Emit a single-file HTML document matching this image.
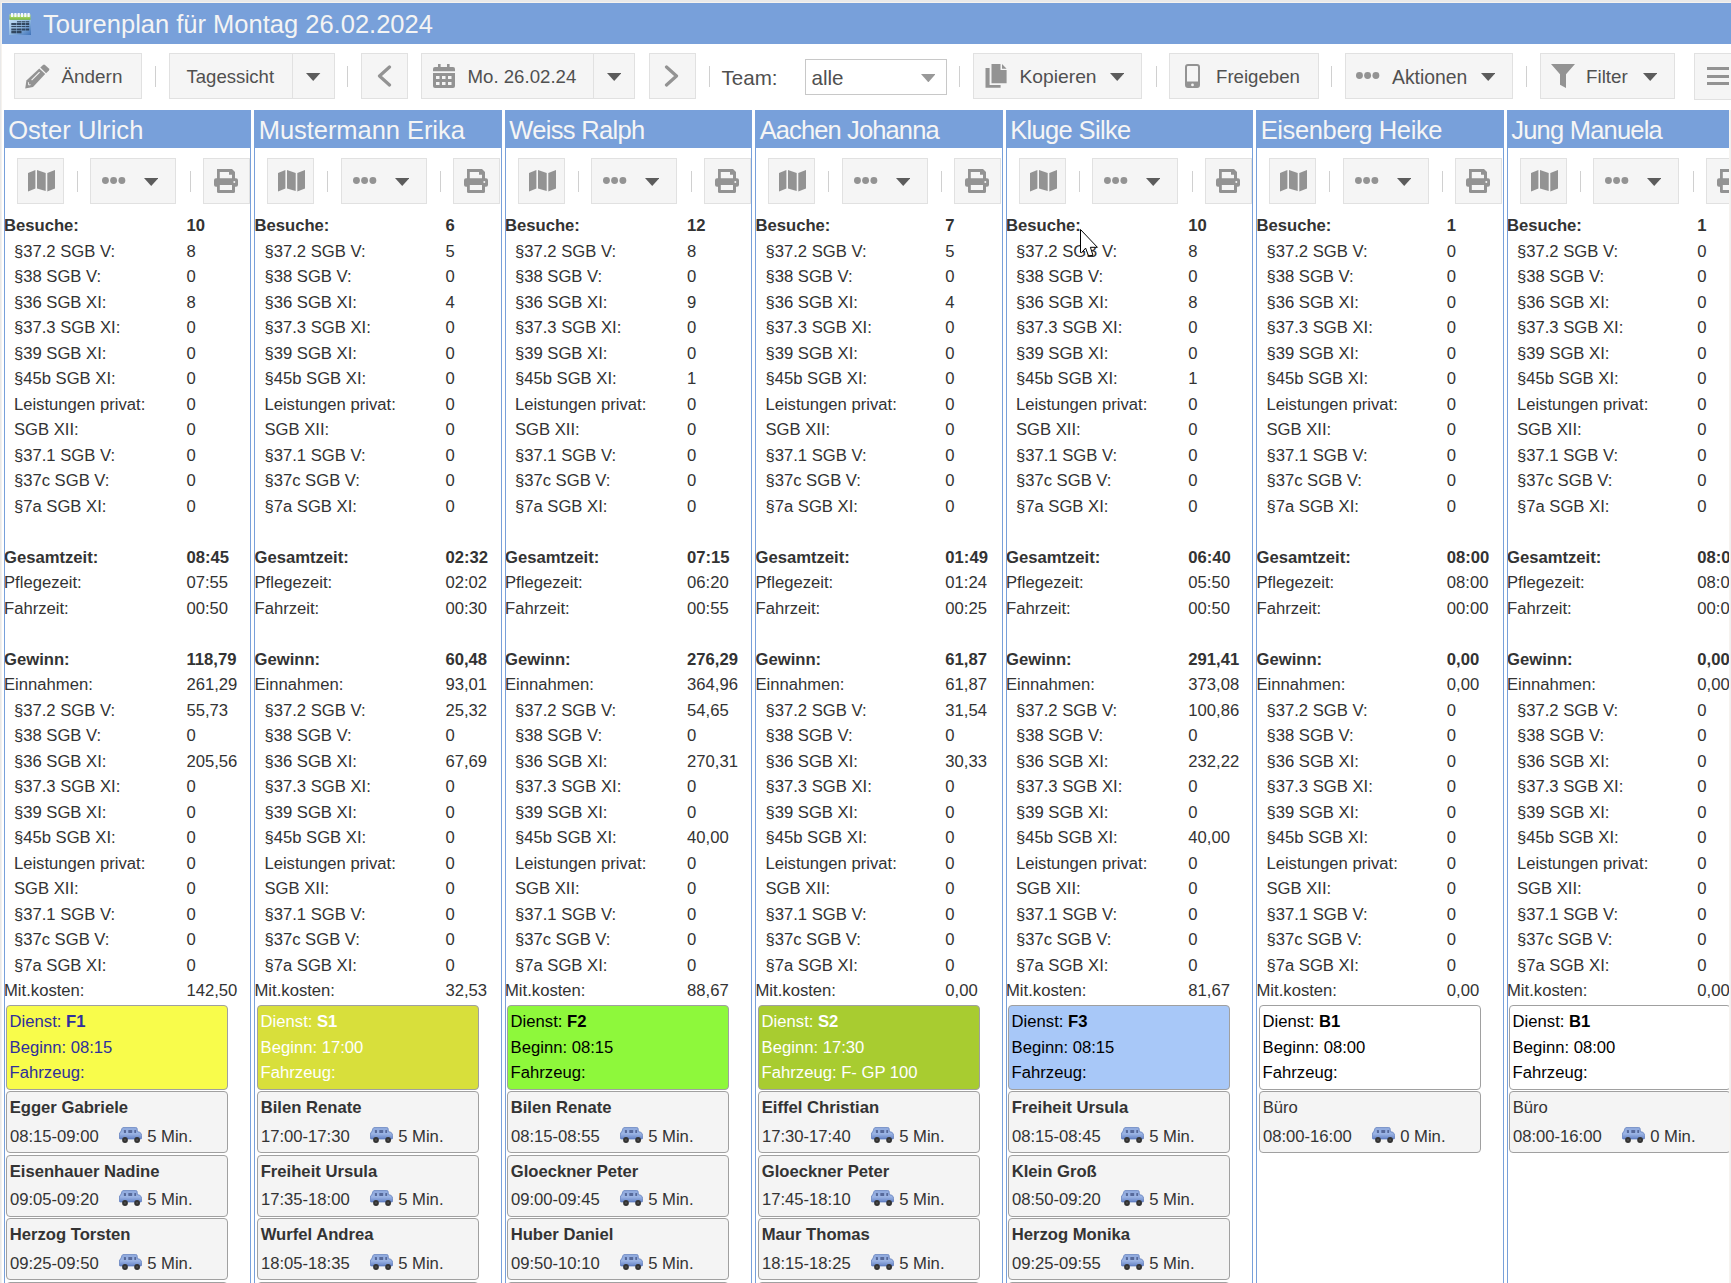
<!DOCTYPE html>
<html><head><meta charset="utf-8"><style>
*{box-sizing:border-box}
html,body{margin:0;padding:0}
body{width:1731px;height:1283px;overflow:hidden;position:relative;background:#e9e9e9;font-family:"Liberation Sans", sans-serif;color:#333}
#page{position:absolute;left:1px;top:2px;width:1730px;height:1281px;background:#f5f2ee}
#page2{position:absolute;left:2px;top:3px;width:1729px;height:1280px;background:#fff}
#rstrip{position:absolute;left:1729px;top:110px;width:2px;height:1173px;background:#efefef;border-left:1px solid #f6f3ef;z-index:5}
.a{position:absolute}
.ic{position:absolute;display:block}
#title{position:absolute;left:2px;top:3px;width:1729px;height:41px;background:#78a0da}
#title .t{position:absolute;left:41px;top:1px;font-size:25.5px;line-height:41px;color:#f4f4f4;white-space:nowrap}
.btn{position:absolute;top:53px;height:46px;border:1px solid #e1e1e1;background:#f5f5f5}
.bt{position:absolute;font-size:18.6px;line-height:46px;top:54px;color:#505050;white-space:nowrap}
.sep{position:absolute;top:66px;width:1px;height:21px;background:#d0d0d0}
.ch{position:absolute;top:110px;height:38px;background:#78a0da;overflow:hidden}
.ch span{position:absolute;left:4.2px;top:1px;font-size:25.5px;line-height:38px;color:#f5f5f5;white-space:nowrap}
.col{position:absolute;top:148px;height:1135px;border-left:1px solid #78a0da;border-right:1px solid #78a0da;overflow:hidden}
.cbtn{position:absolute;top:10px;height:46px;border:1px solid #e1e1e1;background:#f5f5f5}
.csep{position:absolute;top:23px;width:1px;height:21px;background:#d0d0d0}
table.st{position:absolute;left:-1px;top:65.2px;border-collapse:collapse;font-size:16.65px}
table.st td{padding:0;height:25.5px;line-height:25.5px;white-space:nowrap;color:#333}
table.st td.v{padding:0}
table.st tr.b td{font-weight:bold}
table.st td.i{padding-left:9.9px}
.dn{position:absolute;left:1px;top:857px;width:222px;height:85px;border:1px solid #a0a0a0;border-radius:4px;padding:3.3px 0 0 2.6px;font-size:16.65px;line-height:25.5px;white-space:nowrap}
.card{position:absolute;left:1px;width:222px;height:62px;border:1px solid #a0a0a0;border-radius:4px;background:#f4f4f4;font-size:16.65px}
.card .n{position:absolute;left:2.7px;top:3px;line-height:25.5px;font-weight:bold;white-space:nowrap}
.card .tm{position:absolute;left:2.9px;top:31.5px;line-height:25.5px;white-space:nowrap}
.card .mn{position:absolute;left:140.2px;top:31.5px;line-height:25.5px;white-space:nowrap}
</style></head><body>
<svg width="0" height="0" style="position:absolute"><defs><linearGradient id="carg" x1="0" y1="0" x2="0" y2="1"><stop offset="0" stop-color="#8ea8dc"/><stop offset="0.55" stop-color="#9bb4e4"/><stop offset="1" stop-color="#6583c6"/></linearGradient></defs></svg>
<div id="page"></div><div id="page2"></div>
<div id="title">
<svg class="ic" style="left:7px;top:10px" width="22" height="22" viewBox="0 0 22 22">
<defs><linearGradient id="tg" x1="0" y1="0" x2="1" y2="1"><stop offset="0" stop-color="#c4e0f6"/><stop offset="0.5" stop-color="#90b8e0"/><stop offset="1" stop-color="#3f72b8"/></linearGradient>
<linearGradient id="tgg" x1="0" y1="0" x2="0" y2="1"><stop offset="0" stop-color="#c8e890"/><stop offset="1" stop-color="#78b838"/></linearGradient></defs>
<rect x="0" y="6.5" width="22" height="15.5" fill="url(#tg)"/>
<rect x="0.5" y="1.5" width="21" height="5.3" fill="url(#tgg)"/>
<g fill="#f4f8ff"><rect x="2" y="0" width="2.2" height="4"/><rect x="5.3" y="0" width="2.2" height="4"/><rect x="8.6" y="0" width="2.2" height="4"/><rect x="11.9" y="0" width="2.2" height="4"/><rect x="15.2" y="0" width="2.2" height="4"/><rect x="18.5" y="0" width="2.2" height="4"/></g>
<g fill="#22344a" opacity="0.85"><rect x="8.0" y="8.2" width="4.5" height="1.2"/><rect x="13.0" y="8.2" width="3.5" height="1.2"/><rect x="17.0" y="8.2" width="3.2" height="1.2"/><rect x="2.3" y="10.0" width="5.2" height="2.0"/><rect x="8.0" y="10.0" width="4.5" height="2.0"/><rect x="13.0" y="10.0" width="3.5" height="2.0"/><rect x="17.0" y="10.0" width="3.2" height="2.0"/><rect x="2.3" y="12.9" width="5.2" height="1.2"/><rect x="8.0" y="12.9" width="4.5" height="1.2"/><rect x="13.0" y="12.9" width="3.5" height="1.2"/><rect x="17.0" y="12.9" width="3.2" height="1.2"/><rect x="2.3" y="15.5" width="5.2" height="2.0"/><rect x="8.0" y="15.5" width="4.5" height="2.0"/><rect x="13.0" y="15.5" width="3.5" height="2.0"/><rect x="17.0" y="15.5" width="3.2" height="2.0"/><rect x="2.3" y="18.0" width="5.2" height="2.3"/><rect x="8.0" y="18.0" width="4.5" height="2.3"/></g>
</svg>
<div class="t">Tourenplan für Montag 26.02.2024</div>
</div>

<div class="btn" style="left:14px;width:128px;top:53px;height:46px"></div>
<svg class="ic" style="left:25px;top:63.5px" width="25" height="25" viewBox="0 0 25 25"><g fill="#939393"><path d="M15.3 3.6L18 0.9Q19 0 20 0.9L23.9 4.5Q24.9 5.5 23.9 6.5L21.1 9.2Z"/><path d="M14.3 4.6L20.2 10.1L8 23.1L0.2 24.4L1.4 16.5Z"/></g><path fill="#f5f5f5" d="M14.2 7.7L15 8.5L7 16.6L6.2 15.8Z"/><path fill="none" stroke="#f5f5f5" stroke-width="0.9" d="M3.4 18.2L3.7 21L5.6 20.7"/></svg>
<div class="bt" style="left:61.5px;font-size:18.9px">Ändern</div>
<div class="sep" style="left:155px"></div>
<div class="btn" style="left:169px;width:166px;top:53px;height:46px"></div>
<div class="a" style="left:292px;top:53px;width:1px;height:46px;background:#e1e1e1"></div>
<div class="bt" style="left:186.5px;font-size:18.55px">Tagessicht</div>
<svg class="ic" style="left:306.4px;top:73px" width="14.4" height="8" viewBox="0 0 14.4 8"><path d="M0 0H14.4L7.2 8Z" fill="#5c5c5c"/></svg>
<div class="sep" style="left:347px"></div>
<div class="btn" style="left:361px;width:47px;top:53px;height:46px"></div>
<svg class="ic" style="left:376px;top:65px" width="16" height="22" viewBox="0 0 16 22"><path d="M13.5 2L3.5 11L13.5 20" fill="none" stroke="#939393" stroke-width="3.2" stroke-linecap="round" stroke-linejoin="round"/></svg>
<div class="btn" style="left:421px;width:214px;top:53px;height:46px"></div>
<div class="a" style="left:593px;top:53px;width:1px;height:46px;background:#e1e1e1"></div>
<svg class="ic" style="left:433px;top:64px" width="22" height="24" viewBox="0 0 22 24"><g fill="#939393"><rect x="5" y="0" width="2.6" height="4"/><rect x="14" y="0" width="2.6" height="4"/><path d="M0 5Q0 3 2 3H20Q22 3 22 5V7.2H0Z"/><path d="M0 9H22V22Q22 24 20 24H2Q0 24 0 22Z"/></g><g fill="#f5f5f5"><rect x="3" y="12" width="3.5" height="3"/><rect x="9" y="12" width="3.5" height="3"/><rect x="15" y="12" width="3.5" height="3"/><rect x="3" y="18" width="3.5" height="3"/><rect x="9" y="18" width="3.5" height="3"/><rect x="15" y="18" width="3.5" height="3"/></g></svg>
<div class="bt" style="left:467.5px;font-size:18.65px">Mo. 26.02.24</div>
<svg class="ic" style="left:607px;top:73px" width="14.4" height="8" viewBox="0 0 14.4 8"><path d="M0 0H14.4L7.2 8Z" fill="#5c5c5c"/></svg>
<div class="btn" style="left:649px;width:47px;top:53px;height:46px"></div>
<svg class="ic" style="left:664px;top:65px" width="16" height="22" viewBox="0 0 16 22"><path d="M2.5 2L12.5 11L2.5 20" fill="none" stroke="#939393" stroke-width="3.2" stroke-linecap="round" stroke-linejoin="round"/></svg>
<div class="sep" style="left:709px"></div>
<div class="bt" style="left:721.5px;font-size:20.6px;top:55px">Team:</div>
<div class="a" style="left:805px;top:59px;width:142px;height:36px;border:1px solid #c8c8c8;background:#fff"></div>
<div class="bt" style="left:811.5px;font-size:20.6px;top:55px">alle</div>
<svg class="ic" style="left:920.5px;top:74px" width="14.7" height="8.3" viewBox="0 0 14.7 8.3"><path d="M0 0H14.7L7.35 8.3Z" fill="#999"/></svg>
<div class="sep" style="left:959px"></div>
<div class="btn" style="left:973px;width:169px;top:53px;height:46px"></div>
<svg class="ic" style="left:985px;top:64px" width="22" height="24" viewBox="0 0 22 24"><g fill="#939393"><path d="M6.5 0H15.5V6H21.6V19.3H6.5Z"/><path d="M17 0L21.6 4.7H17Z"/><path d="M0.5 4H4.6V21H15.6V23.7H0.5Z"/></g></svg>
<div class="bt" style="left:1019.5px;font-size:19.25px">Kopieren</div>
<svg class="ic" style="left:1110px;top:73px" width="14.4" height="8" viewBox="0 0 14.4 8"><path d="M0 0H14.4L7.2 8Z" fill="#5c5c5c"/></svg>
<div class="sep" style="left:1156px"></div>
<div class="btn" style="left:1169px;width:150px;top:53px;height:46px"></div>
<svg class="ic" style="left:1185px;top:64px" width="15" height="24" viewBox="0 0 15 24"><rect x="1" y="1" width="13" height="22" rx="2" fill="none" stroke="#939393" stroke-width="2"/><rect x="1" y="17.5" width="13" height="5.5" fill="#939393"/><circle cx="7.5" cy="20.9" r="1.4" fill="#f5f5f5"/></svg>
<div class="bt" style="left:1216px;font-size:18.65px">Freigeben</div>
<div class="sep" style="left:1331px"></div>
<div class="btn" style="left:1345px;width:168px;top:53px;height:46px"></div>
<svg class="ic" style="left:1356px;top:72.3px" width="24" height="7" viewBox="0 0 24 7"><g fill="#939393"><circle cx="3.45" cy="3.5" r="3.45"/><circle cx="11.6" cy="3.5" r="3.45"/><circle cx="19.9" cy="3.5" r="3.45"/></g></svg>
<div class="bt" style="left:1392px;font-size:19.35px">Aktionen</div>
<svg class="ic" style="left:1480.7px;top:73px" width="14.4" height="8" viewBox="0 0 14.4 8"><path d="M0 0H14.4L7.2 8Z" fill="#5c5c5c"/></svg>
<div class="sep" style="left:1526px"></div>
<div class="btn" style="left:1540px;width:135px;top:53px;height:46px"></div>
<svg class="ic" style="left:1551px;top:64px" width="24" height="24" viewBox="0 0 24 24"><path fill="#939393" d="M0 0H24L15 10.3V24L9 20.7V10.3Z"/></svg>
<div class="bt" style="left:1586px;font-size:18.8px">Filter</div>
<svg class="ic" style="left:1643px;top:73px" width="14.4" height="8" viewBox="0 0 14.4 8"><path d="M0 0H14.4L7.2 8Z" fill="#5c5c5c"/></svg>
<div class="btn" style="left:1694px;width:66px;top:53px;height:47px"></div>
<div class="a" style="left:1707px;top:67px;width:21.5px;height:3px;background:#939393"></div>
<div class="a" style="left:1707px;top:74.5px;width:21.5px;height:3px;background:#939393"></div>
<div class="a" style="left:1707px;top:82px;width:21.5px;height:3px;background:#939393"></div>
<div class="ch" style="left:4px;width:247px"><span style="left:4.2px;letter-spacing:0.05px">Oster Ulrich</span></div>
<div class="col" style="left:4px;width:247px">
<div class="cbtn" style="left:12px;width:47px"></div>
<svg class="ic" style="left:23px;top:22px" width="27" height="22" viewBox="0 0 27 22"><g fill="#939393"><path d="M0 3L7.4 0V18.5L0 21.5Z"/><path d="M9 0L17.7 3V21L9 18.5Z"/><path d="M19.3 3L27 0V18.5L19.3 21.5Z"/></g></svg>
<div class="csep" style="left:72.4px"></div>
<div class="cbtn" style="left:85px;width:86px"></div>
<svg class="ic" style="left:96.7px;top:29.3px" width="24" height="7" viewBox="0 0 24 7"><g fill="#939393"><circle cx="3.45" cy="3.5" r="3.45"/><circle cx="11.6" cy="3.5" r="3.45"/><circle cx="19.9" cy="3.5" r="3.45"/></g></svg>
<svg class="ic" style="left:138.7px;top:30px" width="14.4" height="8" viewBox="0 0 14.4 8"><path d="M0 0H14.4L7.2 8Z" fill="#5c5c5c"/></svg>
<div class="csep" style="left:184.5px"></div>
<div class="cbtn" style="left:198px;width:47px"></div>
<svg class="ic" style="left:209px;top:20.9px" width="24" height="24" viewBox="0 0 24 24"><path fill="#939393" d="M3 0H18L21 3V10H3Z"/><path fill="#f5f5f5" d="M5.8 2.9H15V5.8H18V10H5.8Z"/><rect fill="#939393" x="0" y="9.2" width="24" height="8.6" rx="2"/><path fill="#939393" d="M3 15H21V22.5Q21 24 19.5 24H4.5Q3 24 3 22.5Z"/><rect fill="#f5f5f5" x="5.8" y="16" width="12.2" height="5"/><circle fill="#f5f5f5" cx="20.3" cy="12.9" r="1"/></svg>
<table class="st" style="width:246.0px;left:-1.0px">
<tr class="b"><td class="">Besuche:</td><td class="v" style="width:63.55px">10</td></tr>
<tr class=""><td class="i">§37.2 SGB V:</td><td class="v">8</td></tr>
<tr class=""><td class="i">§38 SGB V:</td><td class="v">0</td></tr>
<tr class=""><td class="i">§36 SGB XI:</td><td class="v">8</td></tr>
<tr class=""><td class="i">§37.3 SGB XI:</td><td class="v">0</td></tr>
<tr class=""><td class="i">§39 SGB XI:</td><td class="v">0</td></tr>
<tr class=""><td class="i">§45b SGB XI:</td><td class="v">0</td></tr>
<tr class=""><td class="i">Leistungen privat:</td><td class="v">0</td></tr>
<tr class=""><td class="i">SGB XII:</td><td class="v">0</td></tr>
<tr class=""><td class="i">§37.1 SGB V:</td><td class="v">0</td></tr>
<tr class=""><td class="i">§37c SGB V:</td><td class="v">0</td></tr>
<tr class=""><td class="i">§7a SGB XI:</td><td class="v">0</td></tr>
<tr class=""><td class="">&nbsp;</td><td class="v"></td></tr>
<tr class="b"><td class="">Gesamtzeit:</td><td class="v">08:45</td></tr>
<tr class=""><td class="">Pflegezeit:</td><td class="v">07:55</td></tr>
<tr class=""><td class="">Fahrzeit:</td><td class="v">00:50</td></tr>
<tr class=""><td class="">&nbsp;</td><td class="v"></td></tr>
<tr class="b"><td class="">Gewinn:</td><td class="v">118,79</td></tr>
<tr class=""><td class="">Einnahmen:</td><td class="v">261,29</td></tr>
<tr class=""><td class="i">§37.2 SGB V:</td><td class="v">55,73</td></tr>
<tr class=""><td class="i">§38 SGB V:</td><td class="v">0</td></tr>
<tr class=""><td class="i">§36 SGB XI:</td><td class="v">205,56</td></tr>
<tr class=""><td class="i">§37.3 SGB XI:</td><td class="v">0</td></tr>
<tr class=""><td class="i">§39 SGB XI:</td><td class="v">0</td></tr>
<tr class=""><td class="i">§45b SGB XI:</td><td class="v">0</td></tr>
<tr class=""><td class="i">Leistungen privat:</td><td class="v">0</td></tr>
<tr class=""><td class="i">SGB XII:</td><td class="v">0</td></tr>
<tr class=""><td class="i">§37.1 SGB V:</td><td class="v">0</td></tr>
<tr class=""><td class="i">§37c SGB V:</td><td class="v">0</td></tr>
<tr class=""><td class="i">§7a SGB XI:</td><td class="v">0</td></tr>
<tr class=""><td class="">Mit.kosten:</td><td class="v">142,50</td></tr>
</table>
<div class="dn" style="left:1px;background:#f8fc4b;color:#2f2f9c">Dienst: <b>F1</b><br>Beginn: 08:15<br>Fahrzeug: </div>
<div class="card" style="left:1px;top:943.0px"><div class="n" style="">Egger Gabriele</div><div class="tm">08:15-09:00</div><svg class="ic" style="left:111.5px;top:34.7px" width="23" height="16" viewBox="0 0 23 16"><path fill="url(#carg)" stroke="#5675b9" stroke-width="0.7" d="M0.4 7Q0.6 5.2 1.9 4.6L3 1.4Q3.5 0.4 4.8 0.4H16.6Q17.8 0.4 18.1 1.5L18.4 4.6L20.8 5.3Q22.6 6.2 22.6 8.5V11Q22.6 12 21.6 12H1.4Q0.4 12 0.4 11Z"/><g fill="#56699a"><rect x="4.9" y="3.1" width="2.1" height="3" rx="0.5"/><rect x="9.3" y="3.1" width="3.9" height="3" rx="0.5"/><rect x="15.3" y="3.1" width="1.8" height="3" rx="0.5"/></g><g fill="#333"><circle cx="6" cy="13" r="2.9"/><circle cx="18.1" cy="13" r="2.9"/></g><g fill="#555"><circle cx="6" cy="13" r="0.9"/><circle cx="18.1" cy="13" r="0.9"/></g></svg><div class="mn">5 Min.</div></div>
<div class="card" style="left:1px;top:1006.5px"><div class="n" style="">Eisenhauer Nadine</div><div class="tm">09:05-09:20</div><svg class="ic" style="left:111.5px;top:34.7px" width="23" height="16" viewBox="0 0 23 16"><path fill="url(#carg)" stroke="#5675b9" stroke-width="0.7" d="M0.4 7Q0.6 5.2 1.9 4.6L3 1.4Q3.5 0.4 4.8 0.4H16.6Q17.8 0.4 18.1 1.5L18.4 4.6L20.8 5.3Q22.6 6.2 22.6 8.5V11Q22.6 12 21.6 12H1.4Q0.4 12 0.4 11Z"/><g fill="#56699a"><rect x="4.9" y="3.1" width="2.1" height="3" rx="0.5"/><rect x="9.3" y="3.1" width="3.9" height="3" rx="0.5"/><rect x="15.3" y="3.1" width="1.8" height="3" rx="0.5"/></g><g fill="#333"><circle cx="6" cy="13" r="2.9"/><circle cx="18.1" cy="13" r="2.9"/></g><g fill="#555"><circle cx="6" cy="13" r="0.9"/><circle cx="18.1" cy="13" r="0.9"/></g></svg><div class="mn">5 Min.</div></div>
<div class="card" style="left:1px;top:1070.0px"><div class="n" style="">Herzog Torsten</div><div class="tm">09:25-09:50</div><svg class="ic" style="left:111.5px;top:34.7px" width="23" height="16" viewBox="0 0 23 16"><path fill="url(#carg)" stroke="#5675b9" stroke-width="0.7" d="M0.4 7Q0.6 5.2 1.9 4.6L3 1.4Q3.5 0.4 4.8 0.4H16.6Q17.8 0.4 18.1 1.5L18.4 4.6L20.8 5.3Q22.6 6.2 22.6 8.5V11Q22.6 12 21.6 12H1.4Q0.4 12 0.4 11Z"/><g fill="#56699a"><rect x="4.9" y="3.1" width="2.1" height="3" rx="0.5"/><rect x="9.3" y="3.1" width="3.9" height="3" rx="0.5"/><rect x="15.3" y="3.1" width="1.8" height="3" rx="0.5"/></g><g fill="#333"><circle cx="6" cy="13" r="2.9"/><circle cx="18.1" cy="13" r="2.9"/></g><g fill="#555"><circle cx="6" cy="13" r="0.9"/><circle cx="18.1" cy="13" r="0.9"/></g></svg><div class="mn">5 Min.</div></div>
<div class="card" style="left:1px;top:1133.5px"></div>
</div>
<div class="ch" style="left:254px;width:248px"><span style="left:4.7px;letter-spacing:-0.05px">Mustermann Erika</span></div>
<div class="col" style="left:254px;width:248px">
<div class="cbtn" style="left:12px;width:47px"></div>
<svg class="ic" style="left:23px;top:22px" width="27" height="22" viewBox="0 0 27 22"><g fill="#939393"><path d="M0 3L7.4 0V18.5L0 21.5Z"/><path d="M9 0L17.7 3V21L9 18.5Z"/><path d="M19.3 3L27 0V18.5L19.3 21.5Z"/></g></svg>
<div class="csep" style="left:72.4px"></div>
<div class="cbtn" style="left:86.0px;width:86px"></div>
<svg class="ic" style="left:97.7px;top:29.3px" width="24" height="7" viewBox="0 0 24 7"><g fill="#939393"><circle cx="3.45" cy="3.5" r="3.45"/><circle cx="11.6" cy="3.5" r="3.45"/><circle cx="19.9" cy="3.5" r="3.45"/></g></svg>
<svg class="ic" style="left:139.7px;top:30px" width="14.4" height="8" viewBox="0 0 14.4 8"><path d="M0 0H14.4L7.2 8Z" fill="#5c5c5c"/></svg>
<div class="csep" style="left:184.5px"></div>
<div class="cbtn" style="left:198px;width:47px"></div>
<svg class="ic" style="left:209px;top:20.9px" width="24" height="24" viewBox="0 0 24 24"><path fill="#939393" d="M3 0H18L21 3V10H3Z"/><path fill="#f5f5f5" d="M5.8 2.9H15V5.8H18V10H5.8Z"/><rect fill="#939393" x="0" y="9.2" width="24" height="8.6" rx="2"/><path fill="#939393" d="M3 15H21V22.5Q21 24 19.5 24H4.5Q3 24 3 22.5Z"/><rect fill="#f5f5f5" x="5.8" y="16" width="12.2" height="5"/><circle fill="#f5f5f5" cx="20.3" cy="12.9" r="1"/></svg>
<table class="st" style="width:246.5px;left:-0.5px">
<tr class="b"><td class="">Besuche:</td><td class="v" style="width:55.55px">6</td></tr>
<tr class=""><td class="i">§37.2 SGB V:</td><td class="v">5</td></tr>
<tr class=""><td class="i">§38 SGB V:</td><td class="v">0</td></tr>
<tr class=""><td class="i">§36 SGB XI:</td><td class="v">4</td></tr>
<tr class=""><td class="i">§37.3 SGB XI:</td><td class="v">0</td></tr>
<tr class=""><td class="i">§39 SGB XI:</td><td class="v">0</td></tr>
<tr class=""><td class="i">§45b SGB XI:</td><td class="v">0</td></tr>
<tr class=""><td class="i">Leistungen privat:</td><td class="v">0</td></tr>
<tr class=""><td class="i">SGB XII:</td><td class="v">0</td></tr>
<tr class=""><td class="i">§37.1 SGB V:</td><td class="v">0</td></tr>
<tr class=""><td class="i">§37c SGB V:</td><td class="v">0</td></tr>
<tr class=""><td class="i">§7a SGB XI:</td><td class="v">0</td></tr>
<tr class=""><td class="">&nbsp;</td><td class="v"></td></tr>
<tr class="b"><td class="">Gesamtzeit:</td><td class="v">02:32</td></tr>
<tr class=""><td class="">Pflegezeit:</td><td class="v">02:02</td></tr>
<tr class=""><td class="">Fahrzeit:</td><td class="v">00:30</td></tr>
<tr class=""><td class="">&nbsp;</td><td class="v"></td></tr>
<tr class="b"><td class="">Gewinn:</td><td class="v">60,48</td></tr>
<tr class=""><td class="">Einnahmen:</td><td class="v">93,01</td></tr>
<tr class=""><td class="i">§37.2 SGB V:</td><td class="v">25,32</td></tr>
<tr class=""><td class="i">§38 SGB V:</td><td class="v">0</td></tr>
<tr class=""><td class="i">§36 SGB XI:</td><td class="v">67,69</td></tr>
<tr class=""><td class="i">§37.3 SGB XI:</td><td class="v">0</td></tr>
<tr class=""><td class="i">§39 SGB XI:</td><td class="v">0</td></tr>
<tr class=""><td class="i">§45b SGB XI:</td><td class="v">0</td></tr>
<tr class=""><td class="i">Leistungen privat:</td><td class="v">0</td></tr>
<tr class=""><td class="i">SGB XII:</td><td class="v">0</td></tr>
<tr class=""><td class="i">§37.1 SGB V:</td><td class="v">0</td></tr>
<tr class=""><td class="i">§37c SGB V:</td><td class="v">0</td></tr>
<tr class=""><td class="i">§7a SGB XI:</td><td class="v">0</td></tr>
<tr class=""><td class="">Mit.kosten:</td><td class="v">32,53</td></tr>
</table>
<div class="dn" style="left:2.0px;background:#d8df3b;color:#ffffff">Dienst: <b>S1</b><br>Beginn: 17:00<br>Fahrzeug: </div>
<div class="card" style="left:2.0px;top:943.0px"><div class="n" style="">Bilen Renate</div><div class="tm">17:00-17:30</div><svg class="ic" style="left:111.5px;top:34.7px" width="23" height="16" viewBox="0 0 23 16"><path fill="url(#carg)" stroke="#5675b9" stroke-width="0.7" d="M0.4 7Q0.6 5.2 1.9 4.6L3 1.4Q3.5 0.4 4.8 0.4H16.6Q17.8 0.4 18.1 1.5L18.4 4.6L20.8 5.3Q22.6 6.2 22.6 8.5V11Q22.6 12 21.6 12H1.4Q0.4 12 0.4 11Z"/><g fill="#56699a"><rect x="4.9" y="3.1" width="2.1" height="3" rx="0.5"/><rect x="9.3" y="3.1" width="3.9" height="3" rx="0.5"/><rect x="15.3" y="3.1" width="1.8" height="3" rx="0.5"/></g><g fill="#333"><circle cx="6" cy="13" r="2.9"/><circle cx="18.1" cy="13" r="2.9"/></g><g fill="#555"><circle cx="6" cy="13" r="0.9"/><circle cx="18.1" cy="13" r="0.9"/></g></svg><div class="mn">5 Min.</div></div>
<div class="card" style="left:2.0px;top:1006.5px"><div class="n" style="">Freiheit Ursula</div><div class="tm">17:35-18:00</div><svg class="ic" style="left:111.5px;top:34.7px" width="23" height="16" viewBox="0 0 23 16"><path fill="url(#carg)" stroke="#5675b9" stroke-width="0.7" d="M0.4 7Q0.6 5.2 1.9 4.6L3 1.4Q3.5 0.4 4.8 0.4H16.6Q17.8 0.4 18.1 1.5L18.4 4.6L20.8 5.3Q22.6 6.2 22.6 8.5V11Q22.6 12 21.6 12H1.4Q0.4 12 0.4 11Z"/><g fill="#56699a"><rect x="4.9" y="3.1" width="2.1" height="3" rx="0.5"/><rect x="9.3" y="3.1" width="3.9" height="3" rx="0.5"/><rect x="15.3" y="3.1" width="1.8" height="3" rx="0.5"/></g><g fill="#333"><circle cx="6" cy="13" r="2.9"/><circle cx="18.1" cy="13" r="2.9"/></g><g fill="#555"><circle cx="6" cy="13" r="0.9"/><circle cx="18.1" cy="13" r="0.9"/></g></svg><div class="mn">5 Min.</div></div>
<div class="card" style="left:2.0px;top:1070.0px"><div class="n" style="">Wurfel Andrea</div><div class="tm">18:05-18:35</div><svg class="ic" style="left:111.5px;top:34.7px" width="23" height="16" viewBox="0 0 23 16"><path fill="url(#carg)" stroke="#5675b9" stroke-width="0.7" d="M0.4 7Q0.6 5.2 1.9 4.6L3 1.4Q3.5 0.4 4.8 0.4H16.6Q17.8 0.4 18.1 1.5L18.4 4.6L20.8 5.3Q22.6 6.2 22.6 8.5V11Q22.6 12 21.6 12H1.4Q0.4 12 0.4 11Z"/><g fill="#56699a"><rect x="4.9" y="3.1" width="2.1" height="3" rx="0.5"/><rect x="9.3" y="3.1" width="3.9" height="3" rx="0.5"/><rect x="15.3" y="3.1" width="1.8" height="3" rx="0.5"/></g><g fill="#333"><circle cx="6" cy="13" r="2.9"/><circle cx="18.1" cy="13" r="2.9"/></g><g fill="#555"><circle cx="6" cy="13" r="0.9"/><circle cx="18.1" cy="13" r="0.9"/></g></svg><div class="mn">5 Min.</div></div>
<div class="card" style="left:2.0px;top:1133.5px"></div>
</div>
<div class="ch" style="left:505px;width:247px"><span style="left:4.2px;letter-spacing:-0.66px">Weiss Ralph</span></div>
<div class="col" style="left:505px;width:247px">
<div class="cbtn" style="left:12px;width:47px"></div>
<svg class="ic" style="left:23px;top:22px" width="27" height="22" viewBox="0 0 27 22"><g fill="#939393"><path d="M0 3L7.4 0V18.5L0 21.5Z"/><path d="M9 0L17.7 3V21L9 18.5Z"/><path d="M19.3 3L27 0V18.5L19.3 21.5Z"/></g></svg>
<div class="csep" style="left:72.4px"></div>
<div class="cbtn" style="left:85px;width:86px"></div>
<svg class="ic" style="left:96.7px;top:29.3px" width="24" height="7" viewBox="0 0 24 7"><g fill="#939393"><circle cx="3.45" cy="3.5" r="3.45"/><circle cx="11.6" cy="3.5" r="3.45"/><circle cx="19.9" cy="3.5" r="3.45"/></g></svg>
<svg class="ic" style="left:138.7px;top:30px" width="14.4" height="8" viewBox="0 0 14.4 8"><path d="M0 0H14.4L7.2 8Z" fill="#5c5c5c"/></svg>
<div class="csep" style="left:184.5px"></div>
<div class="cbtn" style="left:198px;width:47px"></div>
<svg class="ic" style="left:209px;top:20.9px" width="24" height="24" viewBox="0 0 24 24"><path fill="#939393" d="M3 0H18L21 3V10H3Z"/><path fill="#f5f5f5" d="M5.8 2.9H15V5.8H18V10H5.8Z"/><rect fill="#939393" x="0" y="9.2" width="24" height="8.6" rx="2"/><path fill="#939393" d="M3 15H21V22.5Q21 24 19.5 24H4.5Q3 24 3 22.5Z"/><rect fill="#f5f5f5" x="5.8" y="16" width="12.2" height="5"/><circle fill="#f5f5f5" cx="20.3" cy="12.9" r="1"/></svg>
<table class="st" style="width:246.0px;left:-1.0px">
<tr class="b"><td class="">Besuche:</td><td class="v" style="width:63.95px">12</td></tr>
<tr class=""><td class="i">§37.2 SGB V:</td><td class="v">8</td></tr>
<tr class=""><td class="i">§38 SGB V:</td><td class="v">0</td></tr>
<tr class=""><td class="i">§36 SGB XI:</td><td class="v">9</td></tr>
<tr class=""><td class="i">§37.3 SGB XI:</td><td class="v">0</td></tr>
<tr class=""><td class="i">§39 SGB XI:</td><td class="v">0</td></tr>
<tr class=""><td class="i">§45b SGB XI:</td><td class="v">1</td></tr>
<tr class=""><td class="i">Leistungen privat:</td><td class="v">0</td></tr>
<tr class=""><td class="i">SGB XII:</td><td class="v">0</td></tr>
<tr class=""><td class="i">§37.1 SGB V:</td><td class="v">0</td></tr>
<tr class=""><td class="i">§37c SGB V:</td><td class="v">0</td></tr>
<tr class=""><td class="i">§7a SGB XI:</td><td class="v">0</td></tr>
<tr class=""><td class="">&nbsp;</td><td class="v"></td></tr>
<tr class="b"><td class="">Gesamtzeit:</td><td class="v">07:15</td></tr>
<tr class=""><td class="">Pflegezeit:</td><td class="v">06:20</td></tr>
<tr class=""><td class="">Fahrzeit:</td><td class="v">00:55</td></tr>
<tr class=""><td class="">&nbsp;</td><td class="v"></td></tr>
<tr class="b"><td class="">Gewinn:</td><td class="v">276,29</td></tr>
<tr class=""><td class="">Einnahmen:</td><td class="v">364,96</td></tr>
<tr class=""><td class="i">§37.2 SGB V:</td><td class="v">54,65</td></tr>
<tr class=""><td class="i">§38 SGB V:</td><td class="v">0</td></tr>
<tr class=""><td class="i">§36 SGB XI:</td><td class="v">270,31</td></tr>
<tr class=""><td class="i">§37.3 SGB XI:</td><td class="v">0</td></tr>
<tr class=""><td class="i">§39 SGB XI:</td><td class="v">0</td></tr>
<tr class=""><td class="i">§45b SGB XI:</td><td class="v">40,00</td></tr>
<tr class=""><td class="i">Leistungen privat:</td><td class="v">0</td></tr>
<tr class=""><td class="i">SGB XII:</td><td class="v">0</td></tr>
<tr class=""><td class="i">§37.1 SGB V:</td><td class="v">0</td></tr>
<tr class=""><td class="i">§37c SGB V:</td><td class="v">0</td></tr>
<tr class=""><td class="i">§7a SGB XI:</td><td class="v">0</td></tr>
<tr class=""><td class="">Mit.kosten:</td><td class="v">88,67</td></tr>
</table>
<div class="dn" style="left:1px;background:#8ef83b;color:#000000">Dienst: <b>F2</b><br>Beginn: 08:15<br>Fahrzeug: </div>
<div class="card" style="left:1px;top:943.0px"><div class="n" style="">Bilen Renate</div><div class="tm">08:15-08:55</div><svg class="ic" style="left:111.5px;top:34.7px" width="23" height="16" viewBox="0 0 23 16"><path fill="url(#carg)" stroke="#5675b9" stroke-width="0.7" d="M0.4 7Q0.6 5.2 1.9 4.6L3 1.4Q3.5 0.4 4.8 0.4H16.6Q17.8 0.4 18.1 1.5L18.4 4.6L20.8 5.3Q22.6 6.2 22.6 8.5V11Q22.6 12 21.6 12H1.4Q0.4 12 0.4 11Z"/><g fill="#56699a"><rect x="4.9" y="3.1" width="2.1" height="3" rx="0.5"/><rect x="9.3" y="3.1" width="3.9" height="3" rx="0.5"/><rect x="15.3" y="3.1" width="1.8" height="3" rx="0.5"/></g><g fill="#333"><circle cx="6" cy="13" r="2.9"/><circle cx="18.1" cy="13" r="2.9"/></g><g fill="#555"><circle cx="6" cy="13" r="0.9"/><circle cx="18.1" cy="13" r="0.9"/></g></svg><div class="mn">5 Min.</div></div>
<div class="card" style="left:1px;top:1006.5px"><div class="n" style="">Gloeckner Peter</div><div class="tm">09:00-09:45</div><svg class="ic" style="left:111.5px;top:34.7px" width="23" height="16" viewBox="0 0 23 16"><path fill="url(#carg)" stroke="#5675b9" stroke-width="0.7" d="M0.4 7Q0.6 5.2 1.9 4.6L3 1.4Q3.5 0.4 4.8 0.4H16.6Q17.8 0.4 18.1 1.5L18.4 4.6L20.8 5.3Q22.6 6.2 22.6 8.5V11Q22.6 12 21.6 12H1.4Q0.4 12 0.4 11Z"/><g fill="#56699a"><rect x="4.9" y="3.1" width="2.1" height="3" rx="0.5"/><rect x="9.3" y="3.1" width="3.9" height="3" rx="0.5"/><rect x="15.3" y="3.1" width="1.8" height="3" rx="0.5"/></g><g fill="#333"><circle cx="6" cy="13" r="2.9"/><circle cx="18.1" cy="13" r="2.9"/></g><g fill="#555"><circle cx="6" cy="13" r="0.9"/><circle cx="18.1" cy="13" r="0.9"/></g></svg><div class="mn">5 Min.</div></div>
<div class="card" style="left:1px;top:1070.0px"><div class="n" style="">Huber Daniel</div><div class="tm">09:50-10:10</div><svg class="ic" style="left:111.5px;top:34.7px" width="23" height="16" viewBox="0 0 23 16"><path fill="url(#carg)" stroke="#5675b9" stroke-width="0.7" d="M0.4 7Q0.6 5.2 1.9 4.6L3 1.4Q3.5 0.4 4.8 0.4H16.6Q17.8 0.4 18.1 1.5L18.4 4.6L20.8 5.3Q22.6 6.2 22.6 8.5V11Q22.6 12 21.6 12H1.4Q0.4 12 0.4 11Z"/><g fill="#56699a"><rect x="4.9" y="3.1" width="2.1" height="3" rx="0.5"/><rect x="9.3" y="3.1" width="3.9" height="3" rx="0.5"/><rect x="15.3" y="3.1" width="1.8" height="3" rx="0.5"/></g><g fill="#333"><circle cx="6" cy="13" r="2.9"/><circle cx="18.1" cy="13" r="2.9"/></g><g fill="#555"><circle cx="6" cy="13" r="0.9"/><circle cx="18.1" cy="13" r="0.9"/></g></svg><div class="mn">5 Min.</div></div>
<div class="card" style="left:1px;top:1133.5px"></div>
</div>
<div class="ch" style="left:755px;width:248px"><span style="left:4.7px;letter-spacing:-0.88px">Aachen Johanna</span></div>
<div class="col" style="left:755px;width:248px">
<div class="cbtn" style="left:12px;width:47px"></div>
<svg class="ic" style="left:23px;top:22px" width="27" height="22" viewBox="0 0 27 22"><g fill="#939393"><path d="M0 3L7.4 0V18.5L0 21.5Z"/><path d="M9 0L17.7 3V21L9 18.5Z"/><path d="M19.3 3L27 0V18.5L19.3 21.5Z"/></g></svg>
<div class="csep" style="left:72.4px"></div>
<div class="cbtn" style="left:86.0px;width:86px"></div>
<svg class="ic" style="left:97.7px;top:29.3px" width="24" height="7" viewBox="0 0 24 7"><g fill="#939393"><circle cx="3.45" cy="3.5" r="3.45"/><circle cx="11.6" cy="3.5" r="3.45"/><circle cx="19.9" cy="3.5" r="3.45"/></g></svg>
<svg class="ic" style="left:139.7px;top:30px" width="14.4" height="8" viewBox="0 0 14.4 8"><path d="M0 0H14.4L7.2 8Z" fill="#5c5c5c"/></svg>
<div class="csep" style="left:184.5px"></div>
<div class="cbtn" style="left:198px;width:47px"></div>
<svg class="ic" style="left:209px;top:20.9px" width="24" height="24" viewBox="0 0 24 24"><path fill="#939393" d="M3 0H18L21 3V10H3Z"/><path fill="#f5f5f5" d="M5.8 2.9H15V5.8H18V10H5.8Z"/><rect fill="#939393" x="0" y="9.2" width="24" height="8.6" rx="2"/><path fill="#939393" d="M3 15H21V22.5Q21 24 19.5 24H4.5Q3 24 3 22.5Z"/><rect fill="#f5f5f5" x="5.8" y="16" width="12.2" height="5"/><circle fill="#f5f5f5" cx="20.3" cy="12.9" r="1"/></svg>
<table class="st" style="width:246.5px;left:-0.5px">
<tr class="b"><td class="">Besuche:</td><td class="v" style="width:56.65px">7</td></tr>
<tr class=""><td class="i">§37.2 SGB V:</td><td class="v">5</td></tr>
<tr class=""><td class="i">§38 SGB V:</td><td class="v">0</td></tr>
<tr class=""><td class="i">§36 SGB XI:</td><td class="v">4</td></tr>
<tr class=""><td class="i">§37.3 SGB XI:</td><td class="v">0</td></tr>
<tr class=""><td class="i">§39 SGB XI:</td><td class="v">0</td></tr>
<tr class=""><td class="i">§45b SGB XI:</td><td class="v">0</td></tr>
<tr class=""><td class="i">Leistungen privat:</td><td class="v">0</td></tr>
<tr class=""><td class="i">SGB XII:</td><td class="v">0</td></tr>
<tr class=""><td class="i">§37.1 SGB V:</td><td class="v">0</td></tr>
<tr class=""><td class="i">§37c SGB V:</td><td class="v">0</td></tr>
<tr class=""><td class="i">§7a SGB XI:</td><td class="v">0</td></tr>
<tr class=""><td class="">&nbsp;</td><td class="v"></td></tr>
<tr class="b"><td class="">Gesamtzeit:</td><td class="v">01:49</td></tr>
<tr class=""><td class="">Pflegezeit:</td><td class="v">01:24</td></tr>
<tr class=""><td class="">Fahrzeit:</td><td class="v">00:25</td></tr>
<tr class=""><td class="">&nbsp;</td><td class="v"></td></tr>
<tr class="b"><td class="">Gewinn:</td><td class="v">61,87</td></tr>
<tr class=""><td class="">Einnahmen:</td><td class="v">61,87</td></tr>
<tr class=""><td class="i">§37.2 SGB V:</td><td class="v">31,54</td></tr>
<tr class=""><td class="i">§38 SGB V:</td><td class="v">0</td></tr>
<tr class=""><td class="i">§36 SGB XI:</td><td class="v">30,33</td></tr>
<tr class=""><td class="i">§37.3 SGB XI:</td><td class="v">0</td></tr>
<tr class=""><td class="i">§39 SGB XI:</td><td class="v">0</td></tr>
<tr class=""><td class="i">§45b SGB XI:</td><td class="v">0</td></tr>
<tr class=""><td class="i">Leistungen privat:</td><td class="v">0</td></tr>
<tr class=""><td class="i">SGB XII:</td><td class="v">0</td></tr>
<tr class=""><td class="i">§37.1 SGB V:</td><td class="v">0</td></tr>
<tr class=""><td class="i">§37c SGB V:</td><td class="v">0</td></tr>
<tr class=""><td class="i">§7a SGB XI:</td><td class="v">0</td></tr>
<tr class=""><td class="">Mit.kosten:</td><td class="v">0,00</td></tr>
</table>
<div class="dn" style="left:2.0px;background:#a8cc30;color:#ffffff">Dienst: <b>S2</b><br>Beginn: 17:30<br>Fahrzeug: F- GP 100</div>
<div class="card" style="left:2.0px;top:943.0px"><div class="n" style="">Eiffel Christian</div><div class="tm">17:30-17:40</div><svg class="ic" style="left:111.5px;top:34.7px" width="23" height="16" viewBox="0 0 23 16"><path fill="url(#carg)" stroke="#5675b9" stroke-width="0.7" d="M0.4 7Q0.6 5.2 1.9 4.6L3 1.4Q3.5 0.4 4.8 0.4H16.6Q17.8 0.4 18.1 1.5L18.4 4.6L20.8 5.3Q22.6 6.2 22.6 8.5V11Q22.6 12 21.6 12H1.4Q0.4 12 0.4 11Z"/><g fill="#56699a"><rect x="4.9" y="3.1" width="2.1" height="3" rx="0.5"/><rect x="9.3" y="3.1" width="3.9" height="3" rx="0.5"/><rect x="15.3" y="3.1" width="1.8" height="3" rx="0.5"/></g><g fill="#333"><circle cx="6" cy="13" r="2.9"/><circle cx="18.1" cy="13" r="2.9"/></g><g fill="#555"><circle cx="6" cy="13" r="0.9"/><circle cx="18.1" cy="13" r="0.9"/></g></svg><div class="mn">5 Min.</div></div>
<div class="card" style="left:2.0px;top:1006.5px"><div class="n" style="">Gloeckner Peter</div><div class="tm">17:45-18:10</div><svg class="ic" style="left:111.5px;top:34.7px" width="23" height="16" viewBox="0 0 23 16"><path fill="url(#carg)" stroke="#5675b9" stroke-width="0.7" d="M0.4 7Q0.6 5.2 1.9 4.6L3 1.4Q3.5 0.4 4.8 0.4H16.6Q17.8 0.4 18.1 1.5L18.4 4.6L20.8 5.3Q22.6 6.2 22.6 8.5V11Q22.6 12 21.6 12H1.4Q0.4 12 0.4 11Z"/><g fill="#56699a"><rect x="4.9" y="3.1" width="2.1" height="3" rx="0.5"/><rect x="9.3" y="3.1" width="3.9" height="3" rx="0.5"/><rect x="15.3" y="3.1" width="1.8" height="3" rx="0.5"/></g><g fill="#333"><circle cx="6" cy="13" r="2.9"/><circle cx="18.1" cy="13" r="2.9"/></g><g fill="#555"><circle cx="6" cy="13" r="0.9"/><circle cx="18.1" cy="13" r="0.9"/></g></svg><div class="mn">5 Min.</div></div>
<div class="card" style="left:2.0px;top:1070.0px"><div class="n" style="">Maur Thomas</div><div class="tm">18:15-18:25</div><svg class="ic" style="left:111.5px;top:34.7px" width="23" height="16" viewBox="0 0 23 16"><path fill="url(#carg)" stroke="#5675b9" stroke-width="0.7" d="M0.4 7Q0.6 5.2 1.9 4.6L3 1.4Q3.5 0.4 4.8 0.4H16.6Q17.8 0.4 18.1 1.5L18.4 4.6L20.8 5.3Q22.6 6.2 22.6 8.5V11Q22.6 12 21.6 12H1.4Q0.4 12 0.4 11Z"/><g fill="#56699a"><rect x="4.9" y="3.1" width="2.1" height="3" rx="0.5"/><rect x="9.3" y="3.1" width="3.9" height="3" rx="0.5"/><rect x="15.3" y="3.1" width="1.8" height="3" rx="0.5"/></g><g fill="#333"><circle cx="6" cy="13" r="2.9"/><circle cx="18.1" cy="13" r="2.9"/></g><g fill="#555"><circle cx="6" cy="13" r="0.9"/><circle cx="18.1" cy="13" r="0.9"/></g></svg><div class="mn">5 Min.</div></div>
<div class="card" style="left:2.0px;top:1133.5px"></div>
</div>
<div class="ch" style="left:1006px;width:247px"><span style="left:4.2px;letter-spacing:-0.66px">Kluge Silke</span></div>
<div class="col" style="left:1006px;width:247px">
<div class="cbtn" style="left:12px;width:47px"></div>
<svg class="ic" style="left:23px;top:22px" width="27" height="22" viewBox="0 0 27 22"><g fill="#939393"><path d="M0 3L7.4 0V18.5L0 21.5Z"/><path d="M9 0L17.7 3V21L9 18.5Z"/><path d="M19.3 3L27 0V18.5L19.3 21.5Z"/></g></svg>
<div class="csep" style="left:72.4px"></div>
<div class="cbtn" style="left:85px;width:86px"></div>
<svg class="ic" style="left:96.7px;top:29.3px" width="24" height="7" viewBox="0 0 24 7"><g fill="#939393"><circle cx="3.45" cy="3.5" r="3.45"/><circle cx="11.6" cy="3.5" r="3.45"/><circle cx="19.9" cy="3.5" r="3.45"/></g></svg>
<svg class="ic" style="left:138.7px;top:30px" width="14.4" height="8" viewBox="0 0 14.4 8"><path d="M0 0H14.4L7.2 8Z" fill="#5c5c5c"/></svg>
<div class="csep" style="left:184.5px"></div>
<div class="cbtn" style="left:198px;width:47px"></div>
<svg class="ic" style="left:209px;top:20.9px" width="24" height="24" viewBox="0 0 24 24"><path fill="#939393" d="M3 0H18L21 3V10H3Z"/><path fill="#f5f5f5" d="M5.8 2.9H15V5.8H18V10H5.8Z"/><rect fill="#939393" x="0" y="9.2" width="24" height="8.6" rx="2"/><path fill="#939393" d="M3 15H21V22.5Q21 24 19.5 24H4.5Q3 24 3 22.5Z"/><rect fill="#f5f5f5" x="5.8" y="16" width="12.2" height="5"/><circle fill="#f5f5f5" cx="20.3" cy="12.9" r="1"/></svg>
<table class="st" style="width:246.0px;left:-1.0px">
<tr class="b"><td class="">Besuche:</td><td class="v" style="width:63.75px">10</td></tr>
<tr class=""><td class="i">§37.2 SGB V:</td><td class="v">8</td></tr>
<tr class=""><td class="i">§38 SGB V:</td><td class="v">0</td></tr>
<tr class=""><td class="i">§36 SGB XI:</td><td class="v">8</td></tr>
<tr class=""><td class="i">§37.3 SGB XI:</td><td class="v">0</td></tr>
<tr class=""><td class="i">§39 SGB XI:</td><td class="v">0</td></tr>
<tr class=""><td class="i">§45b SGB XI:</td><td class="v">1</td></tr>
<tr class=""><td class="i">Leistungen privat:</td><td class="v">0</td></tr>
<tr class=""><td class="i">SGB XII:</td><td class="v">0</td></tr>
<tr class=""><td class="i">§37.1 SGB V:</td><td class="v">0</td></tr>
<tr class=""><td class="i">§37c SGB V:</td><td class="v">0</td></tr>
<tr class=""><td class="i">§7a SGB XI:</td><td class="v">0</td></tr>
<tr class=""><td class="">&nbsp;</td><td class="v"></td></tr>
<tr class="b"><td class="">Gesamtzeit:</td><td class="v">06:40</td></tr>
<tr class=""><td class="">Pflegezeit:</td><td class="v">05:50</td></tr>
<tr class=""><td class="">Fahrzeit:</td><td class="v">00:50</td></tr>
<tr class=""><td class="">&nbsp;</td><td class="v"></td></tr>
<tr class="b"><td class="">Gewinn:</td><td class="v">291,41</td></tr>
<tr class=""><td class="">Einnahmen:</td><td class="v">373,08</td></tr>
<tr class=""><td class="i">§37.2 SGB V:</td><td class="v">100,86</td></tr>
<tr class=""><td class="i">§38 SGB V:</td><td class="v">0</td></tr>
<tr class=""><td class="i">§36 SGB XI:</td><td class="v">232,22</td></tr>
<tr class=""><td class="i">§37.3 SGB XI:</td><td class="v">0</td></tr>
<tr class=""><td class="i">§39 SGB XI:</td><td class="v">0</td></tr>
<tr class=""><td class="i">§45b SGB XI:</td><td class="v">40,00</td></tr>
<tr class=""><td class="i">Leistungen privat:</td><td class="v">0</td></tr>
<tr class=""><td class="i">SGB XII:</td><td class="v">0</td></tr>
<tr class=""><td class="i">§37.1 SGB V:</td><td class="v">0</td></tr>
<tr class=""><td class="i">§37c SGB V:</td><td class="v">0</td></tr>
<tr class=""><td class="i">§7a SGB XI:</td><td class="v">0</td></tr>
<tr class=""><td class="">Mit.kosten:</td><td class="v">81,67</td></tr>
</table>
<div class="dn" style="left:1px;background:#a8c8f8;color:#000000">Dienst: <b>F3</b><br>Beginn: 08:15<br>Fahrzeug: </div>
<div class="card" style="left:1px;top:943.0px"><div class="n" style="">Freiheit Ursula</div><div class="tm">08:15-08:45</div><svg class="ic" style="left:111.5px;top:34.7px" width="23" height="16" viewBox="0 0 23 16"><path fill="url(#carg)" stroke="#5675b9" stroke-width="0.7" d="M0.4 7Q0.6 5.2 1.9 4.6L3 1.4Q3.5 0.4 4.8 0.4H16.6Q17.8 0.4 18.1 1.5L18.4 4.6L20.8 5.3Q22.6 6.2 22.6 8.5V11Q22.6 12 21.6 12H1.4Q0.4 12 0.4 11Z"/><g fill="#56699a"><rect x="4.9" y="3.1" width="2.1" height="3" rx="0.5"/><rect x="9.3" y="3.1" width="3.9" height="3" rx="0.5"/><rect x="15.3" y="3.1" width="1.8" height="3" rx="0.5"/></g><g fill="#333"><circle cx="6" cy="13" r="2.9"/><circle cx="18.1" cy="13" r="2.9"/></g><g fill="#555"><circle cx="6" cy="13" r="0.9"/><circle cx="18.1" cy="13" r="0.9"/></g></svg><div class="mn">5 Min.</div></div>
<div class="card" style="left:1px;top:1006.5px"><div class="n" style="">Klein Groß</div><div class="tm">08:50-09:20</div><svg class="ic" style="left:111.5px;top:34.7px" width="23" height="16" viewBox="0 0 23 16"><path fill="url(#carg)" stroke="#5675b9" stroke-width="0.7" d="M0.4 7Q0.6 5.2 1.9 4.6L3 1.4Q3.5 0.4 4.8 0.4H16.6Q17.8 0.4 18.1 1.5L18.4 4.6L20.8 5.3Q22.6 6.2 22.6 8.5V11Q22.6 12 21.6 12H1.4Q0.4 12 0.4 11Z"/><g fill="#56699a"><rect x="4.9" y="3.1" width="2.1" height="3" rx="0.5"/><rect x="9.3" y="3.1" width="3.9" height="3" rx="0.5"/><rect x="15.3" y="3.1" width="1.8" height="3" rx="0.5"/></g><g fill="#333"><circle cx="6" cy="13" r="2.9"/><circle cx="18.1" cy="13" r="2.9"/></g><g fill="#555"><circle cx="6" cy="13" r="0.9"/><circle cx="18.1" cy="13" r="0.9"/></g></svg><div class="mn">5 Min.</div></div>
<div class="card" style="left:1px;top:1070.0px"><div class="n" style="">Herzog Monika</div><div class="tm">09:25-09:55</div><svg class="ic" style="left:111.5px;top:34.7px" width="23" height="16" viewBox="0 0 23 16"><path fill="url(#carg)" stroke="#5675b9" stroke-width="0.7" d="M0.4 7Q0.6 5.2 1.9 4.6L3 1.4Q3.5 0.4 4.8 0.4H16.6Q17.8 0.4 18.1 1.5L18.4 4.6L20.8 5.3Q22.6 6.2 22.6 8.5V11Q22.6 12 21.6 12H1.4Q0.4 12 0.4 11Z"/><g fill="#56699a"><rect x="4.9" y="3.1" width="2.1" height="3" rx="0.5"/><rect x="9.3" y="3.1" width="3.9" height="3" rx="0.5"/><rect x="15.3" y="3.1" width="1.8" height="3" rx="0.5"/></g><g fill="#333"><circle cx="6" cy="13" r="2.9"/><circle cx="18.1" cy="13" r="2.9"/></g><g fill="#555"><circle cx="6" cy="13" r="0.9"/><circle cx="18.1" cy="13" r="0.9"/></g></svg><div class="mn">5 Min.</div></div>
<div class="card" style="left:1px;top:1133.5px"></div>
</div>
<div class="ch" style="left:1256px;width:248px"><span style="left:4.7px;letter-spacing:-0.38px">Eisenberg Heike</span></div>
<div class="col" style="left:1256px;width:248px">
<div class="cbtn" style="left:12px;width:47px"></div>
<svg class="ic" style="left:23px;top:22px" width="27" height="22" viewBox="0 0 27 22"><g fill="#939393"><path d="M0 3L7.4 0V18.5L0 21.5Z"/><path d="M9 0L17.7 3V21L9 18.5Z"/><path d="M19.3 3L27 0V18.5L19.3 21.5Z"/></g></svg>
<div class="csep" style="left:72.4px"></div>
<div class="cbtn" style="left:86.0px;width:86px"></div>
<svg class="ic" style="left:97.7px;top:29.3px" width="24" height="7" viewBox="0 0 24 7"><g fill="#939393"><circle cx="3.45" cy="3.5" r="3.45"/><circle cx="11.6" cy="3.5" r="3.45"/><circle cx="19.9" cy="3.5" r="3.45"/></g></svg>
<svg class="ic" style="left:139.7px;top:30px" width="14.4" height="8" viewBox="0 0 14.4 8"><path d="M0 0H14.4L7.2 8Z" fill="#5c5c5c"/></svg>
<div class="csep" style="left:184.5px"></div>
<div class="cbtn" style="left:198px;width:47px"></div>
<svg class="ic" style="left:209px;top:20.9px" width="24" height="24" viewBox="0 0 24 24"><path fill="#939393" d="M3 0H18L21 3V10H3Z"/><path fill="#f5f5f5" d="M5.8 2.9H15V5.8H18V10H5.8Z"/><rect fill="#939393" x="0" y="9.2" width="24" height="8.6" rx="2"/><path fill="#939393" d="M3 15H21V22.5Q21 24 19.5 24H4.5Q3 24 3 22.5Z"/><rect fill="#f5f5f5" x="5.8" y="16" width="12.2" height="5"/><circle fill="#f5f5f5" cx="20.3" cy="12.9" r="1"/></svg>
<table class="st" style="width:246.5px;left:-0.5px">
<tr class="b"><td class="">Besuche:</td><td class="v" style="width:56.25px">1</td></tr>
<tr class=""><td class="i">§37.2 SGB V:</td><td class="v">0</td></tr>
<tr class=""><td class="i">§38 SGB V:</td><td class="v">0</td></tr>
<tr class=""><td class="i">§36 SGB XI:</td><td class="v">0</td></tr>
<tr class=""><td class="i">§37.3 SGB XI:</td><td class="v">0</td></tr>
<tr class=""><td class="i">§39 SGB XI:</td><td class="v">0</td></tr>
<tr class=""><td class="i">§45b SGB XI:</td><td class="v">0</td></tr>
<tr class=""><td class="i">Leistungen privat:</td><td class="v">0</td></tr>
<tr class=""><td class="i">SGB XII:</td><td class="v">0</td></tr>
<tr class=""><td class="i">§37.1 SGB V:</td><td class="v">0</td></tr>
<tr class=""><td class="i">§37c SGB V:</td><td class="v">0</td></tr>
<tr class=""><td class="i">§7a SGB XI:</td><td class="v">0</td></tr>
<tr class=""><td class="">&nbsp;</td><td class="v"></td></tr>
<tr class="b"><td class="">Gesamtzeit:</td><td class="v">08:00</td></tr>
<tr class=""><td class="">Pflegezeit:</td><td class="v">08:00</td></tr>
<tr class=""><td class="">Fahrzeit:</td><td class="v">00:00</td></tr>
<tr class=""><td class="">&nbsp;</td><td class="v"></td></tr>
<tr class="b"><td class="">Gewinn:</td><td class="v">0,00</td></tr>
<tr class=""><td class="">Einnahmen:</td><td class="v">0,00</td></tr>
<tr class=""><td class="i">§37.2 SGB V:</td><td class="v">0</td></tr>
<tr class=""><td class="i">§38 SGB V:</td><td class="v">0</td></tr>
<tr class=""><td class="i">§36 SGB XI:</td><td class="v">0</td></tr>
<tr class=""><td class="i">§37.3 SGB XI:</td><td class="v">0</td></tr>
<tr class=""><td class="i">§39 SGB XI:</td><td class="v">0</td></tr>
<tr class=""><td class="i">§45b SGB XI:</td><td class="v">0</td></tr>
<tr class=""><td class="i">Leistungen privat:</td><td class="v">0</td></tr>
<tr class=""><td class="i">SGB XII:</td><td class="v">0</td></tr>
<tr class=""><td class="i">§37.1 SGB V:</td><td class="v">0</td></tr>
<tr class=""><td class="i">§37c SGB V:</td><td class="v">0</td></tr>
<tr class=""><td class="i">§7a SGB XI:</td><td class="v">0</td></tr>
<tr class=""><td class="">Mit.kosten:</td><td class="v">0,00</td></tr>
</table>
<div class="dn" style="left:2.0px;background:#ffffff;color:#000000">Dienst: <b>B1</b><br>Beginn: 08:00<br>Fahrzeug: </div>
<div class="card" style="left:2.0px;top:943.0px"><div class="n" style="font-weight:normal">Büro</div><div class="tm">08:00-16:00</div><svg class="ic" style="left:111.5px;top:34.7px" width="23" height="16" viewBox="0 0 23 16"><path fill="url(#carg)" stroke="#5675b9" stroke-width="0.7" d="M0.4 7Q0.6 5.2 1.9 4.6L3 1.4Q3.5 0.4 4.8 0.4H16.6Q17.8 0.4 18.1 1.5L18.4 4.6L20.8 5.3Q22.6 6.2 22.6 8.5V11Q22.6 12 21.6 12H1.4Q0.4 12 0.4 11Z"/><g fill="#56699a"><rect x="4.9" y="3.1" width="2.1" height="3" rx="0.5"/><rect x="9.3" y="3.1" width="3.9" height="3" rx="0.5"/><rect x="15.3" y="3.1" width="1.8" height="3" rx="0.5"/></g><g fill="#333"><circle cx="6" cy="13" r="2.9"/><circle cx="18.1" cy="13" r="2.9"/></g><g fill="#555"><circle cx="6" cy="13" r="0.9"/><circle cx="18.1" cy="13" r="0.9"/></g></svg><div class="mn">0 Min.</div></div>
</div>
<div class="ch" style="left:1507px;width:247px"><span style="left:4.2px;letter-spacing:-0.78px">Jung Manuela</span></div>
<div class="col" style="left:1507px;width:247px">
<div class="cbtn" style="left:12px;width:47px"></div>
<svg class="ic" style="left:23px;top:22px" width="27" height="22" viewBox="0 0 27 22"><g fill="#939393"><path d="M0 3L7.4 0V18.5L0 21.5Z"/><path d="M9 0L17.7 3V21L9 18.5Z"/><path d="M19.3 3L27 0V18.5L19.3 21.5Z"/></g></svg>
<div class="csep" style="left:72.4px"></div>
<div class="cbtn" style="left:85px;width:86px"></div>
<svg class="ic" style="left:96.7px;top:29.3px" width="24" height="7" viewBox="0 0 24 7"><g fill="#939393"><circle cx="3.45" cy="3.5" r="3.45"/><circle cx="11.6" cy="3.5" r="3.45"/><circle cx="19.9" cy="3.5" r="3.45"/></g></svg>
<svg class="ic" style="left:138.7px;top:30px" width="14.4" height="8" viewBox="0 0 14.4 8"><path d="M0 0H14.4L7.2 8Z" fill="#5c5c5c"/></svg>
<div class="csep" style="left:184.5px"></div>
<div class="cbtn" style="left:198px;width:47px"></div>
<svg class="ic" style="left:209px;top:20.9px" width="24" height="24" viewBox="0 0 24 24"><path fill="#939393" d="M3 0H18L21 3V10H3Z"/><path fill="#f5f5f5" d="M5.8 2.9H15V5.8H18V10H5.8Z"/><rect fill="#939393" x="0" y="9.2" width="24" height="8.6" rx="2"/><path fill="#939393" d="M3 15H21V22.5Q21 24 19.5 24H4.5Q3 24 3 22.5Z"/><rect fill="#f5f5f5" x="5.8" y="16" width="12.2" height="5"/><circle fill="#f5f5f5" cx="20.3" cy="12.9" r="1"/></svg>
<table class="st" style="width:246.0px;left:-1.0px">
<tr class="b"><td class="">Besuche:</td><td class="v" style="width:55.75px">1</td></tr>
<tr class=""><td class="i">§37.2 SGB V:</td><td class="v">0</td></tr>
<tr class=""><td class="i">§38 SGB V:</td><td class="v">0</td></tr>
<tr class=""><td class="i">§36 SGB XI:</td><td class="v">0</td></tr>
<tr class=""><td class="i">§37.3 SGB XI:</td><td class="v">0</td></tr>
<tr class=""><td class="i">§39 SGB XI:</td><td class="v">0</td></tr>
<tr class=""><td class="i">§45b SGB XI:</td><td class="v">0</td></tr>
<tr class=""><td class="i">Leistungen privat:</td><td class="v">0</td></tr>
<tr class=""><td class="i">SGB XII:</td><td class="v">0</td></tr>
<tr class=""><td class="i">§37.1 SGB V:</td><td class="v">0</td></tr>
<tr class=""><td class="i">§37c SGB V:</td><td class="v">0</td></tr>
<tr class=""><td class="i">§7a SGB XI:</td><td class="v">0</td></tr>
<tr class=""><td class="">&nbsp;</td><td class="v"></td></tr>
<tr class="b"><td class="">Gesamtzeit:</td><td class="v">08:00</td></tr>
<tr class=""><td class="">Pflegezeit:</td><td class="v">08:00</td></tr>
<tr class=""><td class="">Fahrzeit:</td><td class="v">00:00</td></tr>
<tr class=""><td class="">&nbsp;</td><td class="v"></td></tr>
<tr class="b"><td class="">Gewinn:</td><td class="v">0,00</td></tr>
<tr class=""><td class="">Einnahmen:</td><td class="v">0,00</td></tr>
<tr class=""><td class="i">§37.2 SGB V:</td><td class="v">0</td></tr>
<tr class=""><td class="i">§38 SGB V:</td><td class="v">0</td></tr>
<tr class=""><td class="i">§36 SGB XI:</td><td class="v">0</td></tr>
<tr class=""><td class="i">§37.3 SGB XI:</td><td class="v">0</td></tr>
<tr class=""><td class="i">§39 SGB XI:</td><td class="v">0</td></tr>
<tr class=""><td class="i">§45b SGB XI:</td><td class="v">0</td></tr>
<tr class=""><td class="i">Leistungen privat:</td><td class="v">0</td></tr>
<tr class=""><td class="i">SGB XII:</td><td class="v">0</td></tr>
<tr class=""><td class="i">§37.1 SGB V:</td><td class="v">0</td></tr>
<tr class=""><td class="i">§37c SGB V:</td><td class="v">0</td></tr>
<tr class=""><td class="i">§7a SGB XI:</td><td class="v">0</td></tr>
<tr class=""><td class="">Mit.kosten:</td><td class="v">0,00</td></tr>
</table>
<div class="dn" style="left:1px;background:#ffffff;color:#000000">Dienst: <b>B1</b><br>Beginn: 08:00<br>Fahrzeug: </div>
<div class="card" style="left:1px;top:943.0px"><div class="n" style="font-weight:normal">Büro</div><div class="tm">08:00-16:00</div><svg class="ic" style="left:111.5px;top:34.7px" width="23" height="16" viewBox="0 0 23 16"><path fill="url(#carg)" stroke="#5675b9" stroke-width="0.7" d="M0.4 7Q0.6 5.2 1.9 4.6L3 1.4Q3.5 0.4 4.8 0.4H16.6Q17.8 0.4 18.1 1.5L18.4 4.6L20.8 5.3Q22.6 6.2 22.6 8.5V11Q22.6 12 21.6 12H1.4Q0.4 12 0.4 11Z"/><g fill="#56699a"><rect x="4.9" y="3.1" width="2.1" height="3" rx="0.5"/><rect x="9.3" y="3.1" width="3.9" height="3" rx="0.5"/><rect x="15.3" y="3.1" width="1.8" height="3" rx="0.5"/></g><g fill="#333"><circle cx="6" cy="13" r="2.9"/><circle cx="18.1" cy="13" r="2.9"/></g><g fill="#555"><circle cx="6" cy="13" r="0.9"/><circle cx="18.1" cy="13" r="0.9"/></g></svg><div class="mn">0 Min.</div></div>
</div>
<svg class="ic" style="left:1080px;top:228.7px" width="20" height="29" viewBox="0 0 20 29"><path d="M0.5 0.5V23.5L1.6 23.7L5.6 19.1L8.5 26.8L13 26.3L10.4 18.3H17.4Z" fill="#fff" stroke="#000" stroke-width="1" stroke-linejoin="round"/></svg>
<div id="rstrip"></div>
</body></html>
